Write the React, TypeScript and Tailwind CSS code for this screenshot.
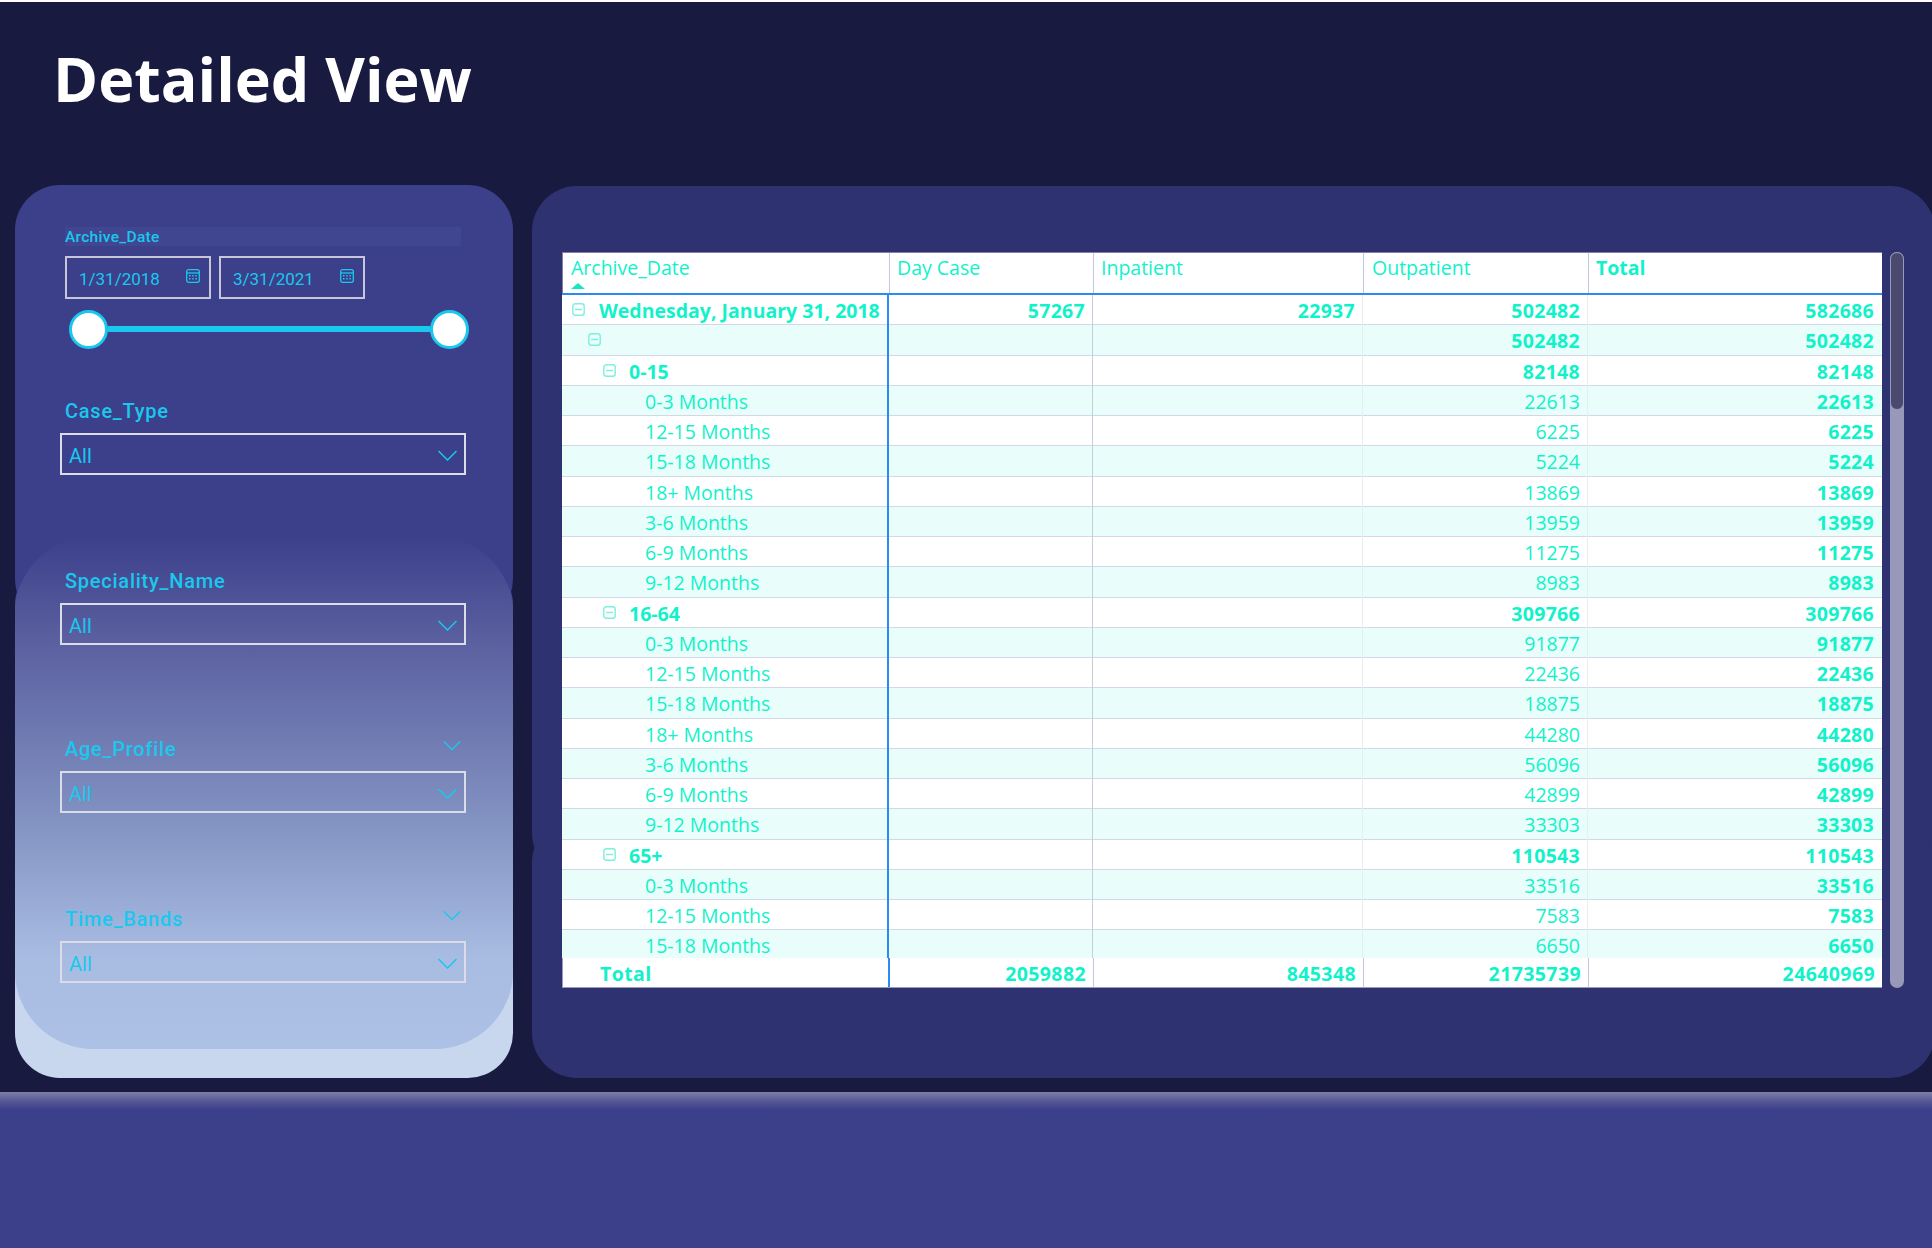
const rows: { label: string; level: number; toggle?: boolean; bold?: boolean; day?: string; inpatient?: string; out: string; total: string }[] = [
  { label: 'Wednesday, January 31, 2018', level: 0, toggle: true, bold: true, day: '57267', inpatient: '22937', out: '502482', total: '582686' },
  { label: '', level: 1, toggle: true, bold: true, out: '502482', total: '502482' },
  { label: '0-15', level: 2, toggle: true, bold: true, out: '82148', total: '82148' },
  { label: '0-3 Months', level: 3, out: '22613', total: '22613' },
  { label: '12-15 Months', level: 3, out: '6225', total: '6225' },
  { label: '15-18 Months', level: 3, out: '5224', total: '5224' },
  { label: '18+ Months', level: 3, out: '13869', total: '13869' },
  { label: '3-6 Months', level: 3, out: '13959', total: '13959' },
  { label: '6-9 Months', level: 3, out: '11275', total: '11275' },
  { label: '9-12 Months', level: 3, out: '8983', total: '8983' },
  { label: '16-64', level: 2, toggle: true, bold: true, out: '309766', total: '309766' },
  { label: '0-3 Months', level: 3, out: '91877', total: '91877' },
  { label: '12-15 Months', level: 3, out: '22436', total: '22436' },
  { label: '15-18 Months', level: 3, out: '18875', total: '18875' },
  { label: '18+ Months', level: 3, out: '44280', total: '44280' },
  { label: '3-6 Months', level: 3, out: '56096', total: '56096' },
  { label: '6-9 Months', level: 3, out: '42899', total: '42899' },
  { label: '9-12 Months', level: 3, out: '33303', total: '33303' },
  { label: '65+', level: 2, toggle: true, bold: true, out: '110543', total: '110543' },
  { label: '0-3 Months', level: 3, out: '33516', total: '33516' },
  { label: '12-15 Months', level: 3, out: '7583', total: '7583' },
  { label: '15-18 Months', level: 3, out: '6650', total: '6650' },
];

const columns = 'grid grid-cols-[327px_204px_270px_225px_294px]';

function Chevron({ size = 'w-[21px] h-[11px]' }: { size?: string }) {
  return (
    <svg viewBox="0 0 20 11" className={size} fill="none" stroke="#1ac8ee" strokeWidth="1.5">
      <polyline points="1,1 10,10 19,1" />
    </svg>
  );
}

function CalendarIcon() {
  return (
    <svg viewBox="0 0 14 14" className="w-[14px] h-[14px]" fill="none" stroke="#1ac8ee" strokeWidth="1.3">
      <rect x="0.7" y="0.7" width="12.6" height="12.6" rx="2" />
      <line x1="0.7" y1="4" x2="13.3" y2="4" />
      <g fill="#1ac8ee" stroke="none">
        <rect x="3" y="6" width="1.5" height="1.5" />
        <rect x="6.2" y="6" width="1.5" height="1.5" />
        <rect x="9.4" y="6" width="1.5" height="1.5" />
        <rect x="3" y="9" width="1.5" height="1.5" />
        <rect x="6.2" y="9" width="1.5" height="1.5" />
        <rect x="9.4" y="9" width="1.5" height="1.5" />
      </g>
    </svg>
  );
}

function Toggle() {
  return (
    <svg viewBox="0 0 13 13" className="w-[13px] h-[13px] shrink-0" fill="none" stroke="#7cf0de" strokeWidth="1.4">
      <rect x="0.8" y="0.8" width="11.4" height="11.4" rx="2.5" />
      <line x1="3" y1="6.5" x2="10" y2="6.5" />
    </svg>
  );
}

function DateBox({ value }: { value: string }) {
  return (
    <div className="w-[146px] h-[43px] border-2 border-[#c6c6d8] flex items-center justify-between pl-[12px] pr-[9px]">
      <span className="text-[17px] font-normal text-[#1ac8ee] mt-[4px]">{value}</span>
      <span className="mb-[4px]"><CalendarIcon /></span>
    </div>
  );
}

function Dropdown() {
  return (
    <div className="h-[42px] border-2 border-[#dcdce8] flex items-center justify-between pl-[7px] pr-[6px]">
      <span className="text-[20px] text-[#1ac8ee] mt-[4px]">All</span>
      <span className="mt-[2px]"><Chevron /></span>
    </div>
  );
}

function SlicerField({ label, marginTop, collapse }: { label: string; marginTop: string; collapse?: boolean }) {
  return (
    <div className={marginTop}>
      <div className="h-[32px] pl-[5px] flex justify-between items-start">
        <span className="text-[20px] leading-[20px] font-medium tracking-[0.75px] text-[#1ac8ee]">{label}</span>
        {collapse && <span className="mr-[5px] mt-[1px]"><Chevron size="w-[18px] h-[11px]" /></span>}
      </div>
      <Dropdown />
    </div>
  );
}

function Filters() {
  return (
    <div className="relative w-[498px] h-[893px] shrink-0">
      <div className="absolute left-0 right-0 top-0 h-[439px] rounded-[45px] bg-[#3c3f8a]" />
      <div className="absolute left-0 right-0 top-[375px] bottom-0 rounded-[45px] bg-[linear-gradient(#3c3f8a_0%,#7e8cbe_40%,#c8d6ee_85%)]" />
      <div className="absolute left-0 right-0 top-[351px] h-[513px] rounded-[78px] bg-[linear-gradient(#3c3f8a_0%,#5a5f9f_20%,#8090c0_54%,#a8bce2_82%,#adc0e6_100%)]" />

      <div className="relative pt-[42px] pl-[45px] pr-[47px] font-['Roboto',sans-serif]">
        <div className="ml-[5px] mr-[5px] h-[19px] bg-[#404690] text-[15.5px] leading-[20px] font-medium tracking-[0.3px] text-[#1ac8ee]">Archive_Date</div>
        <div className="ml-[5px] mt-[10px] flex gap-[8px]">
          <DateBox value="1/31/2018" />
          <DateBox value="3/31/2021" />
        </div>
        <div className="ml-[9px] w-[400px] mt-[10px] h-[40px] flex items-center">
          <div className="w-[39px] h-[39px] rounded-full bg-white border-[3px] border-[#1ac8ee] shrink-0" />
          <div className="flex-1 h-[6px] bg-[#1ac8ee]" />
          <div className="w-[39px] h-[39px] rounded-full bg-white border-[3px] border-[#1ac8ee] shrink-0" />
        </div>
        <SlicerField label="Case_Type" marginTop="mt-[52px]" />
        <SlicerField label="Speciality_Name" marginTop="mt-[96px]" />
        <SlicerField label="Age_Profile" marginTop="mt-[94px]" collapse />
        <SlicerField label="Time_Bands" marginTop="mt-[96px]" collapse />
      </div>
    </div>
  );
}

function NumberCell({ value, bold, strong }: { value?: string; bold?: boolean; strong?: boolean }) {
  return (
    <div className={`pr-[7px] text-right border-r ${strong ? 'border-[#c4cce0]' : 'border-[#e6eef2]'} ${bold ? 'font-bold tracking-[0.3px]' : 'font-normal'}`}>
      {value}
    </div>
  );
}

function Matrix() {
  return (
    <div className="w-[1320px] text-[#12f2ca] font-['Open_Sans',sans-serif] text-[19.5px]">
      <div className={`${columns} h-[43px] bg-white border-t border-l border-[#8080a8] border-b-2 border-b-[#2a8cf0] font-normal leading-[30px]`}>
        <div className="relative pl-[8px] border-r border-[#c4c8dc]">
          Archive_Date
          <div className="absolute left-[8px] top-[30px] w-0 h-0 border-x-[7px] border-x-transparent border-b-[6px] border-b-[#14e8c0]" />
        </div>
        <div className="pl-[7px] border-r border-[#c4c8dc]">Day Case</div>
        <div className="pl-[7px] border-r border-[#c4c8dc]">Inpatient</div>
        <div className="pl-[8px] border-r border-[#c4c8dc]">Outpatient</div>
        <div className="pl-[7px] font-bold">Total</div>
      </div>
      <div className="h-[663px] overflow-hidden">
        {rows.map((row, i) => (
          <div
            key={i}
            className={`${columns} h-[30.25px] leading-[31px] border-b border-[#d2d8e8] ${i % 2 === 1 ? 'bg-[#e9fefb]' : 'bg-white'}`}
          >
            <div className="border-r-2 border-[#2a8cf0] flex items-center relative">
              {row.toggle && (
                <span className={`absolute top-[8px] ${row.level === 0 ? 'left-[10px]' : row.level === 1 ? 'left-[26px]' : 'left-[41px]'}`}>
                  <Toggle />
                </span>
              )}
              <span className={`${row.level === 0 ? 'pl-[37px]' : row.level === 2 ? 'pl-[67px]' : 'pl-[83px]'} ${row.bold ? 'font-bold' : 'font-normal'} whitespace-nowrap`}>
                {row.label}
              </span>
            </div>
            <NumberCell value={row.day} bold strong />
            <NumberCell value={row.inpatient} bold />
            <NumberCell value={row.out} bold={row.bold} />
            <div className="pr-[8px] text-right font-bold tracking-[0.3px]">{row.total}</div>
          </div>
        ))}
      </div>
      <div className={`${columns} h-[30px] bg-white border-l border-b border-[#9a9ac0] font-bold leading-[27px] tracking-[0.4px]`}>
        <div className="pl-[37px] pt-[2px] border-r-2 border-[#2a8cf0]">Total</div>
        <div className="pr-[7px] pt-[2px] text-right border-r border-[#c4c8dc]">2059882</div>
        <div className="pr-[7px] pt-[2px] text-right border-r border-[#c4c8dc]">845348</div>
        <div className="pr-[7px] pt-[2px] text-right border-r border-[#c4c8dc]">21735739</div>
        <div className="pr-[8px] pt-[2px] text-right">24640969</div>
      </div>
    </div>
  );
}

export default function App() {
  return (
    <div className="w-[1932px] h-[1248px] bg-[#181a40] overflow-hidden flex flex-col">
      <div className="h-[2px] bg-white shrink-0" />
      <div className="h-[183px] shrink-0 pl-[53px] pt-[37px]">
        <h1 className="text-[61px] leading-[80px] font-bold text-white font-['Open_Sans',sans-serif]">Detailed View</h1>
      </div>
      <div className="h-[893px] shrink-0 flex pl-[15px] gap-[19px]">
        <Filters />
        <div className="relative flex-1 pt-[67px] pl-[30px]">
          <div className="absolute left-0 -right-[3px] top-[1px] h-[692px] rounded-[45px] bg-[#2f3270]" />
          <div className="absolute left-0 -right-[3px] top-[632px] bottom-0 rounded-[45px] bg-[#2f3270]" />
          <div className="relative flex gap-[8px]">
            <Matrix />
            <div className="w-[14px] h-[736px] rounded-full bg-[#9898b8]">
              <div className="h-[158px] rounded-full bg-[#4a4a70] border border-[#9898b8]" />
            </div>
          </div>
        </div>
      </div>
      <div className="h-[14px] shrink-0" />
      <div className="flex-1 bg-[linear-gradient(#807fa9_0px,#5a5b98_8px,#3c3f8a_18px)]" />
    </div>
  );
}
